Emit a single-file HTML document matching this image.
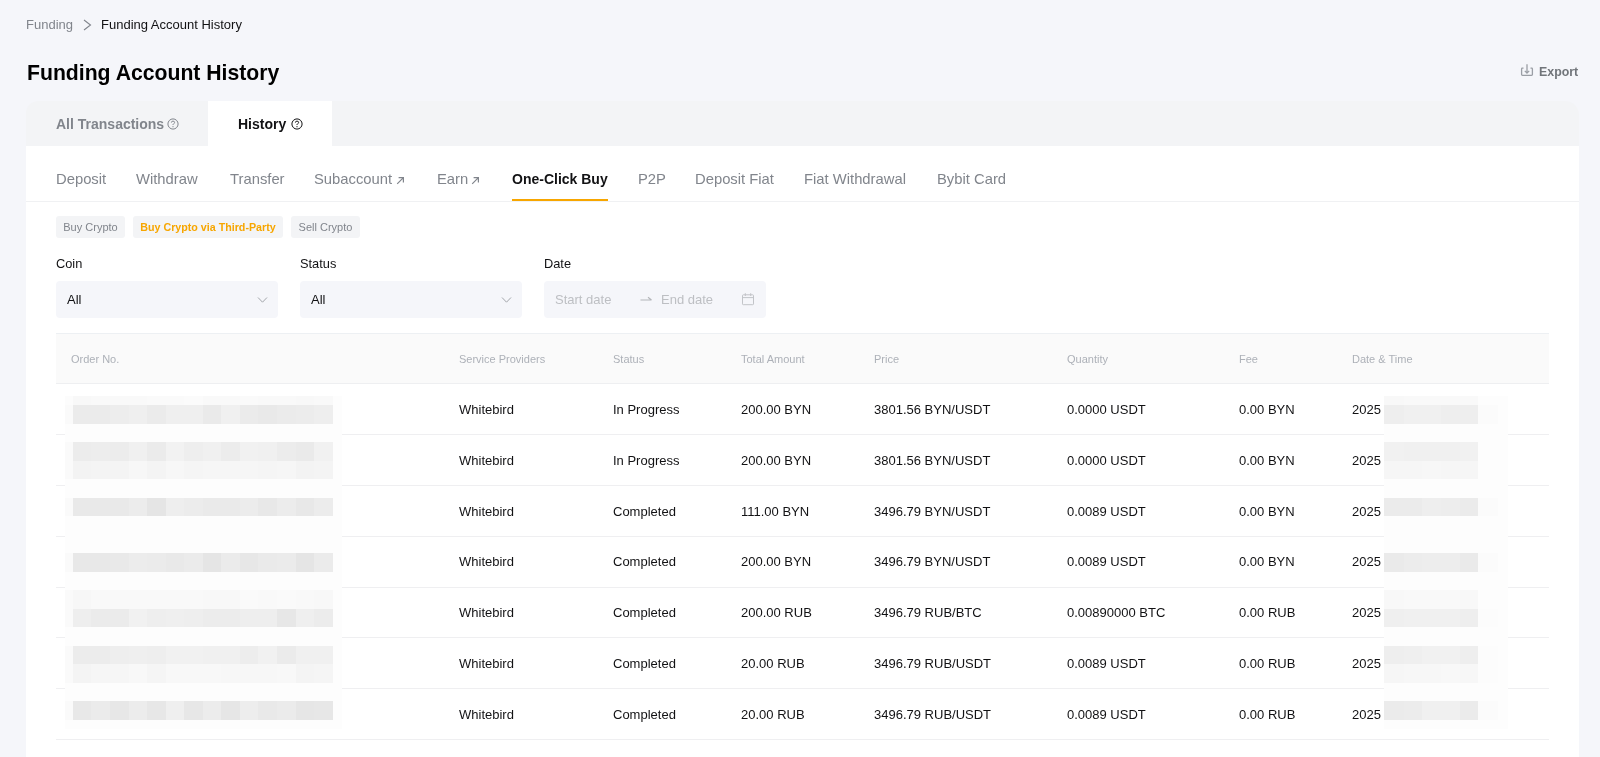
<!DOCTYPE html>
<html><head><meta charset="utf-8"><style>
*{margin:0;padding:0;box-sizing:border-box}
html,body{width:1600px;height:757px;overflow:hidden}
#root{position:absolute;left:0;top:0;width:1600px;height:757px;will-change:transform}
body{background:#f5f6fa;font-family:"Liberation Sans",sans-serif;color:#121214;position:relative}
.a{position:absolute;white-space:nowrap}
.bc{font-size:13px;line-height:16px}
.title{font-size:21.2px;font-weight:bold;line-height:24px;color:#000}
.export{font-size:12.4px;font-weight:bold;color:#71757a;line-height:16px}
.tabs{position:absolute;left:26px;top:101px;width:1553px;height:45px;background:#f3f4f6;border-radius:12px 14px 0 0;overflow:hidden}
.tab2{position:absolute;left:182px;top:0;width:124px;height:45px;background:#fff}
.tt{position:absolute;font-size:14px;font-weight:bold;line-height:16px;white-space:nowrap}
.card{position:absolute;left:26px;top:146px;width:1553px;height:611px;background:#fff}
.sub{position:absolute;top:170px;font-size:14.8px;color:#81858c;line-height:18px;white-space:nowrap}
.subact{font-weight:bold;color:#121214;font-size:14px}
.sep{position:absolute;left:26px;top:201px;width:1553px;height:1px;background:#f0f1f3}
.ul{position:absolute;left:512px;top:199px;width:96px;height:2px;background:#f7a600}
.chip{position:absolute;top:216px;height:22px;background:#f3f4f6;border-radius:3px;font-size:11px;line-height:22px;color:#81858c;text-align:center;white-space:nowrap}
.lbl{position:absolute;top:256px;font-size:12.8px;color:#121214;line-height:16px}
.sel{position:absolute;top:281px;height:37px;width:222px;background:#f5f6fa;border-radius:4px}
.sel .v{position:absolute;left:11px;top:11px;font-size:13px;line-height:16px;color:#121214}
.th{position:absolute;left:56px;top:333px;width:1493px;height:51px;background:#fafafa;border-top:1px solid #edf0f3;border-bottom:1px solid #eeeff1}
.th span{position:absolute;top:19px;font-size:11px;line-height:13px;color:#adb1b8;white-space:nowrap}
.row{position:absolute;left:56px;width:1493px;height:51px;border-bottom:1px solid #efeff1}
.rt{font-size:13px;line-height:16px;color:#121214}
.mz{position:absolute;background:#fdfdfd}
.mz i{position:absolute;display:block}
</style></head><body>
<div id="root"><div class="a bc" style="left:26px;top:17px;color:#81858c">Funding</div>
<svg class="a" style="left:83px;top:19px" width="9" height="12" viewBox="0 0 9 12"><path d="M1 1 L7.5 6 L1 11" fill="none" stroke="#81858c" stroke-width="1.1"/></svg>
<div class="a bc" style="left:101px;top:17px;color:#121214">Funding Account History</div>
<div class="a title" style="left:27px;top:61px">Funding Account History</div>
<svg class="a" style="left:1520px;top:63px" width="14" height="14" viewBox="0 0 14 14"><path d="M3.5 5.2 H2.3 Q1.6 5.2 1.6 5.9 V11.6 Q1.6 12.4 2.4 12.4 H11.6 Q12.4 12.4 12.4 11.6 V5.9 Q12.4 5.2 11.7 5.2 H10.5" fill="none" stroke="#9a9ea5" stroke-width="1.3"/><path d="M7 1.2 V10 M4.8 7.9 L7 10.1 L9.2 7.9" fill="none" stroke="#9a9ea5" stroke-width="1.3"/></svg>
<div class="a export" style="left:1539px;top:64px">Export</div>
<div class="tabs"><div class="tab2"></div></div>
<div class="card"></div>
<div class="tt" style="left:56px;top:116px;color:#81858c">All Transactions</div>
<svg class="a" style="left:167px;top:117.5px" width="12" height="12" viewBox="0 0 12 12"><circle cx="6" cy="6" r="5.1" fill="none" stroke="#81858c" stroke-width="1"/><path d="M4.4 4.6 Q4.4 3.1 6 3.1 Q7.6 3.1 7.6 4.5 Q7.6 5.4 6.6 5.8 Q6 6.1 6 7" fill="none" stroke="#81858c" stroke-width="0.95"/><circle cx="6" cy="8.7" r="0.6" fill="#81858c"/></svg>
<div class="tt" style="left:238px;top:116px;color:#121214">History</div>
<svg class="a" style="left:290.5px;top:117.5px" width="12" height="12" viewBox="0 0 12 12"><circle cx="6" cy="6" r="5.1" fill="none" stroke="#121214" stroke-width="1"/><path d="M4.4 4.6 Q4.4 3.1 6 3.1 Q7.6 3.1 7.6 4.5 Q7.6 5.4 6.6 5.8 Q6 6.1 6 7" fill="none" stroke="#121214" stroke-width="0.95"/><circle cx="6" cy="8.7" r="0.6" fill="#121214"/></svg>
<div class="sub" style="left:56px">Deposit</div>
<div class="sub" style="left:136px">Withdraw</div>
<div class="sub" style="left:230px">Transfer</div>
<div class="sub" style="left:314px">Subaccount</div>
<div class="sub" style="left:437px">Earn</div>
<div class="sub" style="left:638px">P2P</div>
<div class="sub" style="left:695px">Deposit Fiat</div>
<div class="sub" style="left:804px">Fiat Withdrawal</div>
<div class="sub" style="left:937px">Bybit Card</div>
<svg class="a" style="left:395.5px;top:176px" width="9" height="9" viewBox="0 0 9 9"><path d="M1.2 7.8 L7.4 1.6 M2.6 1.6 H7.4 V6.4" fill="none" stroke="#81858c" stroke-width="1.2"/></svg>
<svg class="a" style="left:470.5px;top:176px" width="9" height="9" viewBox="0 0 9 9"><path d="M1.2 7.8 L7.4 1.6 M2.6 1.6 H7.4 V6.4" fill="none" stroke="#81858c" stroke-width="1.2"/></svg>
<div class="sub subact" style="left:512px">One-Click Buy</div>
<div class="sep"></div><div class="ul"></div>
<div class="chip" style="left:56px;width:69px">Buy Crypto</div>
<div class="chip" style="left:133px;width:150px;color:#f7a600;font-weight:bold;font-size:10.7px">Buy Crypto via Third-Party</div>
<div class="chip" style="left:291px;width:69px">Sell Crypto</div>
<div class="lbl" style="left:56px">Coin</div>
<div class="lbl" style="left:300px">Status</div>
<div class="lbl" style="left:544px">Date</div>
<div class="sel" style="left:56px"><div class="v">All</div></div>
<svg class="a" style="left:256.5px;top:296px" width="11" height="8" viewBox="0 0 11 8"><path d="M1 1.5 L5.5 6.2 L10 1.5" fill="none" stroke="#a3a6ab" stroke-width="1"/></svg>
<div class="sel" style="left:300px"><div class="v">All</div></div>
<svg class="a" style="left:500.5px;top:296px" width="11" height="8" viewBox="0 0 11 8"><path d="M1 1.5 L5.5 6.2 L10 1.5" fill="none" stroke="#a3a6ab" stroke-width="1"/></svg>
<div class="sel" style="left:544px"></div>
<div class="a" style="left:555px;top:292px;font-size:13px;line-height:16px;color:#bdbfc3">Start date</div>
<div class="a" style="left:661px;top:292px;font-size:13px;line-height:16px;color:#bdbfc3">End date</div>
<svg class="a" style="left:640px;top:295px" width="13" height="8" viewBox="0 0 13 8"><path d="M0.5 5 H11.5 M8 2.2 L11.5 5" fill="none" stroke="#b3b5b9" stroke-width="1.1"/></svg>
<svg class="a" style="left:741px;top:292px" width="14" height="14" viewBox="0 0 14 14"><rect x="1.5" y="2.8" width="11" height="9.9" rx="0.8" fill="none" stroke="#c2c4c8" stroke-width="1"/><path d="M1.5 5.6 H12.5 M4.3 1.2 V4 M9.7 1.2 V4" fill="none" stroke="#c2c4c8" stroke-width="1"/></svg>
<div class="th"><span style="left:15px">Order No.</span><span style="left:403px">Service Providers</span><span style="left:557px">Status</span><span style="left:685px">Total Amount</span><span style="left:818px">Price</span><span style="left:1011px">Quantity</span><span style="left:1183px">Fee</span><span style="left:1296px">Date &amp; Time</span></div>
<div class="a" style="left:56px;top:434px;width:1493px;height:1px;background:#efeff1"></div>
<div class="a" style="left:56px;top:485px;width:1493px;height:1px;background:#efeff1"></div>
<div class="a" style="left:56px;top:536px;width:1493px;height:1px;background:#efeff1"></div>
<div class="a" style="left:56px;top:587px;width:1493px;height:1px;background:#efeff1"></div>
<div class="a" style="left:56px;top:637px;width:1493px;height:1px;background:#efeff1"></div>
<div class="a" style="left:56px;top:688px;width:1493px;height:1px;background:#efeff1"></div>
<div class="a" style="left:56px;top:739px;width:1493px;height:1px;background:#efeff1"></div>
<div class="a rt" style="left:459px;top:402.0px">Whitebird</div>
<div class="a rt" style="left:613px;top:402.0px">In Progress</div>
<div class="a rt" style="left:741px;top:402.0px">200.00 BYN</div>
<div class="a rt" style="left:874px;top:402.0px">3801.56 BYN/USDT</div>
<div class="a rt" style="left:1067px;top:402.0px">0.0000 USDT</div>
<div class="a rt" style="left:1239px;top:402.0px">0.00 BYN</div>
<div class="a rt" style="left:1352px;top:402.0px">2025</div>
<div class="a rt" style="left:459px;top:452.8px">Whitebird</div>
<div class="a rt" style="left:613px;top:452.8px">In Progress</div>
<div class="a rt" style="left:741px;top:452.8px">200.00 BYN</div>
<div class="a rt" style="left:874px;top:452.8px">3801.56 BYN/USDT</div>
<div class="a rt" style="left:1067px;top:452.8px">0.0000 USDT</div>
<div class="a rt" style="left:1239px;top:452.8px">0.00 BYN</div>
<div class="a rt" style="left:1352px;top:452.8px">2025</div>
<div class="a rt" style="left:459px;top:503.6px">Whitebird</div>
<div class="a rt" style="left:613px;top:503.6px">Completed</div>
<div class="a rt" style="left:741px;top:503.6px">111.00 BYN</div>
<div class="a rt" style="left:874px;top:503.6px">3496.79 BYN/USDT</div>
<div class="a rt" style="left:1067px;top:503.6px">0.0089 USDT</div>
<div class="a rt" style="left:1239px;top:503.6px">0.00 BYN</div>
<div class="a rt" style="left:1352px;top:503.6px">2025</div>
<div class="a rt" style="left:459px;top:554.4px">Whitebird</div>
<div class="a rt" style="left:613px;top:554.4px">Completed</div>
<div class="a rt" style="left:741px;top:554.4px">200.00 BYN</div>
<div class="a rt" style="left:874px;top:554.4px">3496.79 BYN/USDT</div>
<div class="a rt" style="left:1067px;top:554.4px">0.0089 USDT</div>
<div class="a rt" style="left:1239px;top:554.4px">0.00 BYN</div>
<div class="a rt" style="left:1352px;top:554.4px">2025</div>
<div class="a rt" style="left:459px;top:605.2px">Whitebird</div>
<div class="a rt" style="left:613px;top:605.2px">Completed</div>
<div class="a rt" style="left:741px;top:605.2px">200.00 RUB</div>
<div class="a rt" style="left:874px;top:605.2px">3496.79 RUB/BTC</div>
<div class="a rt" style="left:1067px;top:605.2px">0.00890000 BTC</div>
<div class="a rt" style="left:1239px;top:605.2px">0.00 RUB</div>
<div class="a rt" style="left:1352px;top:605.2px">2025</div>
<div class="a rt" style="left:459px;top:656.0px">Whitebird</div>
<div class="a rt" style="left:613px;top:656.0px">Completed</div>
<div class="a rt" style="left:741px;top:656.0px">20.00 RUB</div>
<div class="a rt" style="left:874px;top:656.0px">3496.79 RUB/USDT</div>
<div class="a rt" style="left:1067px;top:656.0px">0.0089 USDT</div>
<div class="a rt" style="left:1239px;top:656.0px">0.00 RUB</div>
<div class="a rt" style="left:1352px;top:656.0px">2025</div>
<div class="a rt" style="left:459px;top:706.8px">Whitebird</div>
<div class="a rt" style="left:613px;top:706.8px">Completed</div>
<div class="a rt" style="left:741px;top:706.8px">20.00 RUB</div>
<div class="a rt" style="left:874px;top:706.8px">3496.79 RUB/USDT</div>
<div class="a rt" style="left:1067px;top:706.8px">0.0089 USDT</div>
<div class="a rt" style="left:1239px;top:706.8px">0.00 RUB</div>
<div class="a rt" style="left:1352px;top:706.8px">2025</div>
<div class="mz" style="left:65px;top:395.7px;width:277.0px;height:332.9px"><i style="left:0;top:0.0px;width:7.8px;height:9.8px;background:rgb(252,252,252)"></i><i style="left:7.8px;top:0.0px;width:18.9px;height:9.8px;background:rgb(248,248,248)"></i><i style="left:26.4px;top:0.0px;width:18.9px;height:9.8px;background:rgb(249,249,249)"></i><i style="left:44.9px;top:0.0px;width:18.9px;height:9.8px;background:rgb(249,249,249)"></i><i style="left:63.5px;top:0.0px;width:18.9px;height:9.8px;background:rgb(249,249,249)"></i><i style="left:82.0px;top:0.0px;width:18.9px;height:9.8px;background:rgb(250,250,250)"></i><i style="left:100.6px;top:0.0px;width:18.9px;height:9.8px;background:rgb(250,250,250)"></i><i style="left:119.1px;top:0.0px;width:18.9px;height:9.8px;background:rgb(251,251,251)"></i><i style="left:137.7px;top:0.0px;width:18.9px;height:9.8px;background:rgb(249,249,249)"></i><i style="left:156.2px;top:0.0px;width:18.9px;height:9.8px;background:rgb(249,249,249)"></i><i style="left:174.8px;top:0.0px;width:18.9px;height:9.8px;background:rgb(250,250,250)"></i><i style="left:193.4px;top:0.0px;width:18.9px;height:9.8px;background:rgb(249,249,249)"></i><i style="left:211.9px;top:0.0px;width:18.9px;height:9.8px;background:rgb(249,249,249)"></i><i style="left:230.5px;top:0.0px;width:18.9px;height:9.8px;background:rgb(248,248,248)"></i><i style="left:249.0px;top:0.0px;width:18.9px;height:9.8px;background:rgb(249,249,249)"></i><i style="left:0;top:9.5px;width:7.8px;height:18.8px;background:rgb(250,250,250)"></i><i style="left:7.8px;top:9.5px;width:18.9px;height:18.8px;background:rgb(235,235,235)"></i><i style="left:26.4px;top:9.5px;width:18.9px;height:18.8px;background:rgb(235,235,235)"></i><i style="left:44.9px;top:9.5px;width:18.9px;height:18.8px;background:rgb(237,237,237)"></i><i style="left:63.5px;top:9.5px;width:18.9px;height:18.8px;background:rgb(239,239,239)"></i><i style="left:82.0px;top:9.5px;width:18.9px;height:18.8px;background:rgb(235,235,235)"></i><i style="left:100.6px;top:9.5px;width:18.9px;height:18.8px;background:rgb(239,239,239)"></i><i style="left:119.1px;top:9.5px;width:18.9px;height:18.8px;background:rgb(239,239,239)"></i><i style="left:137.7px;top:9.5px;width:18.9px;height:18.8px;background:rgb(234,234,234)"></i><i style="left:156.2px;top:9.5px;width:18.9px;height:18.8px;background:rgb(240,240,240)"></i><i style="left:174.8px;top:9.5px;width:18.9px;height:18.8px;background:rgb(235,235,235)"></i><i style="left:193.4px;top:9.5px;width:18.9px;height:18.8px;background:rgb(233,233,233)"></i><i style="left:211.9px;top:9.5px;width:18.9px;height:18.8px;background:rgb(235,235,235)"></i><i style="left:230.5px;top:9.5px;width:18.9px;height:18.8px;background:rgb(236,236,236)"></i><i style="left:249.0px;top:9.5px;width:18.9px;height:18.8px;background:rgb(238,238,238)"></i><i style="left:0;top:46.5px;width:7.8px;height:18.8px;background:rgb(250,250,250)"></i><i style="left:7.8px;top:46.5px;width:18.9px;height:18.8px;background:rgb(236,236,236)"></i><i style="left:26.4px;top:46.5px;width:18.9px;height:18.8px;background:rgb(237,237,237)"></i><i style="left:44.9px;top:46.5px;width:18.9px;height:18.8px;background:rgb(236,236,236)"></i><i style="left:63.5px;top:46.5px;width:18.9px;height:18.8px;background:rgb(240,240,240)"></i><i style="left:82.0px;top:46.5px;width:18.9px;height:18.8px;background:rgb(235,235,235)"></i><i style="left:100.6px;top:46.5px;width:18.9px;height:18.8px;background:rgb(242,242,242)"></i><i style="left:119.1px;top:46.5px;width:18.9px;height:18.8px;background:rgb(238,238,238)"></i><i style="left:137.7px;top:46.5px;width:18.9px;height:18.8px;background:rgb(240,240,240)"></i><i style="left:156.2px;top:46.5px;width:18.9px;height:18.8px;background:rgb(236,236,236)"></i><i style="left:174.8px;top:46.5px;width:18.9px;height:18.8px;background:rgb(241,241,241)"></i><i style="left:193.4px;top:46.5px;width:18.9px;height:18.8px;background:rgb(240,240,240)"></i><i style="left:211.9px;top:46.5px;width:18.9px;height:18.8px;background:rgb(236,236,236)"></i><i style="left:230.5px;top:46.5px;width:18.9px;height:18.8px;background:rgb(234,234,234)"></i><i style="left:249.0px;top:46.5px;width:18.9px;height:18.8px;background:rgb(241,241,241)"></i><i style="left:0;top:65.0px;width:7.8px;height:18.8px;background:rgb(250,250,250)"></i><i style="left:7.8px;top:65.0px;width:18.9px;height:18.8px;background:rgb(243,243,243)"></i><i style="left:26.4px;top:65.0px;width:18.9px;height:18.8px;background:rgb(244,244,244)"></i><i style="left:44.9px;top:65.0px;width:18.9px;height:18.8px;background:rgb(244,244,244)"></i><i style="left:63.5px;top:65.0px;width:18.9px;height:18.8px;background:rgb(247,247,247)"></i><i style="left:82.0px;top:65.0px;width:18.9px;height:18.8px;background:rgb(244,244,244)"></i><i style="left:100.6px;top:65.0px;width:18.9px;height:18.8px;background:rgb(247,247,247)"></i><i style="left:119.1px;top:65.0px;width:18.9px;height:18.8px;background:rgb(245,245,245)"></i><i style="left:137.7px;top:65.0px;width:18.9px;height:18.8px;background:rgb(246,246,246)"></i><i style="left:156.2px;top:65.0px;width:18.9px;height:18.8px;background:rgb(246,246,246)"></i><i style="left:174.8px;top:65.0px;width:18.9px;height:18.8px;background:rgb(246,246,246)"></i><i style="left:193.4px;top:65.0px;width:18.9px;height:18.8px;background:rgb(245,245,245)"></i><i style="left:211.9px;top:65.0px;width:18.9px;height:18.8px;background:rgb(246,246,246)"></i><i style="left:230.5px;top:65.0px;width:18.9px;height:18.8px;background:rgb(243,243,243)"></i><i style="left:249.0px;top:65.0px;width:18.9px;height:18.8px;background:rgb(244,244,244)"></i><i style="left:0;top:102.0px;width:7.8px;height:18.8px;background:rgb(250,250,250)"></i><i style="left:7.8px;top:102.0px;width:18.9px;height:18.8px;background:rgb(233,233,233)"></i><i style="left:26.4px;top:102.0px;width:18.9px;height:18.8px;background:rgb(233,233,233)"></i><i style="left:44.9px;top:102.0px;width:18.9px;height:18.8px;background:rgb(233,233,233)"></i><i style="left:63.5px;top:102.0px;width:18.9px;height:18.8px;background:rgb(236,236,236)"></i><i style="left:82.0px;top:102.0px;width:18.9px;height:18.8px;background:rgb(229,229,229)"></i><i style="left:100.6px;top:102.0px;width:18.9px;height:18.8px;background:rgb(238,238,238)"></i><i style="left:119.1px;top:102.0px;width:18.9px;height:18.8px;background:rgb(236,236,236)"></i><i style="left:137.7px;top:102.0px;width:18.9px;height:18.8px;background:rgb(234,234,234)"></i><i style="left:156.2px;top:102.0px;width:18.9px;height:18.8px;background:rgb(234,234,234)"></i><i style="left:174.8px;top:102.0px;width:18.9px;height:18.8px;background:rgb(236,236,236)"></i><i style="left:193.4px;top:102.0px;width:18.9px;height:18.8px;background:rgb(232,232,232)"></i><i style="left:211.9px;top:102.0px;width:18.9px;height:18.8px;background:rgb(236,236,236)"></i><i style="left:230.5px;top:102.0px;width:18.9px;height:18.8px;background:rgb(232,232,232)"></i><i style="left:249.0px;top:102.0px;width:18.9px;height:18.8px;background:rgb(236,236,236)"></i><i style="left:0;top:157.5px;width:7.8px;height:18.8px;background:rgb(250,250,250)"></i><i style="left:7.8px;top:157.5px;width:18.9px;height:18.8px;background:rgb(232,232,232)"></i><i style="left:26.4px;top:157.5px;width:18.9px;height:18.8px;background:rgb(232,232,232)"></i><i style="left:44.9px;top:157.5px;width:18.9px;height:18.8px;background:rgb(233,233,233)"></i><i style="left:63.5px;top:157.5px;width:18.9px;height:18.8px;background:rgb(236,236,236)"></i><i style="left:82.0px;top:157.5px;width:18.9px;height:18.8px;background:rgb(235,235,235)"></i><i style="left:100.6px;top:157.5px;width:18.9px;height:18.8px;background:rgb(233,233,233)"></i><i style="left:119.1px;top:157.5px;width:18.9px;height:18.8px;background:rgb(235,235,235)"></i><i style="left:137.7px;top:157.5px;width:18.9px;height:18.8px;background:rgb(229,229,229)"></i><i style="left:156.2px;top:157.5px;width:18.9px;height:18.8px;background:rgb(235,235,235)"></i><i style="left:174.8px;top:157.5px;width:18.9px;height:18.8px;background:rgb(231,231,231)"></i><i style="left:193.4px;top:157.5px;width:18.9px;height:18.8px;background:rgb(234,234,234)"></i><i style="left:211.9px;top:157.5px;width:18.9px;height:18.8px;background:rgb(235,235,235)"></i><i style="left:230.5px;top:157.5px;width:18.9px;height:18.8px;background:rgb(229,229,229)"></i><i style="left:249.0px;top:157.5px;width:18.9px;height:18.8px;background:rgb(235,235,235)"></i><i style="left:0;top:194.5px;width:7.8px;height:18.8px;background:rgb(250,250,250)"></i><i style="left:7.8px;top:194.5px;width:18.9px;height:18.8px;background:rgb(247,247,247)"></i><i style="left:26.4px;top:194.5px;width:18.9px;height:18.8px;background:rgb(249,249,249)"></i><i style="left:44.9px;top:194.5px;width:18.9px;height:18.8px;background:rgb(249,249,249)"></i><i style="left:63.5px;top:194.5px;width:18.9px;height:18.8px;background:rgb(249,249,249)"></i><i style="left:82.0px;top:194.5px;width:18.9px;height:18.8px;background:rgb(249,249,249)"></i><i style="left:100.6px;top:194.5px;width:18.9px;height:18.8px;background:rgb(249,249,249)"></i><i style="left:119.1px;top:194.5px;width:18.9px;height:18.8px;background:rgb(249,249,249)"></i><i style="left:137.7px;top:194.5px;width:18.9px;height:18.8px;background:rgb(248,248,248)"></i><i style="left:156.2px;top:194.5px;width:18.9px;height:18.8px;background:rgb(248,248,248)"></i><i style="left:174.8px;top:194.5px;width:18.9px;height:18.8px;background:rgb(250,250,250)"></i><i style="left:193.4px;top:194.5px;width:18.9px;height:18.8px;background:rgb(249,249,249)"></i><i style="left:211.9px;top:194.5px;width:18.9px;height:18.8px;background:rgb(250,250,250)"></i><i style="left:230.5px;top:194.5px;width:18.9px;height:18.8px;background:rgb(249,249,249)"></i><i style="left:249.0px;top:194.5px;width:18.9px;height:18.8px;background:rgb(248,248,248)"></i><i style="left:0;top:213.0px;width:7.8px;height:18.8px;background:rgb(250,250,250)"></i><i style="left:7.8px;top:213.0px;width:18.9px;height:18.8px;background:rgb(238,238,238)"></i><i style="left:26.4px;top:213.0px;width:18.9px;height:18.8px;background:rgb(235,235,235)"></i><i style="left:44.9px;top:213.0px;width:18.9px;height:18.8px;background:rgb(235,235,235)"></i><i style="left:63.5px;top:213.0px;width:18.9px;height:18.8px;background:rgb(241,241,241)"></i><i style="left:82.0px;top:213.0px;width:18.9px;height:18.8px;background:rgb(238,238,238)"></i><i style="left:100.6px;top:213.0px;width:18.9px;height:18.8px;background:rgb(239,239,239)"></i><i style="left:119.1px;top:213.0px;width:18.9px;height:18.8px;background:rgb(238,238,238)"></i><i style="left:137.7px;top:213.0px;width:18.9px;height:18.8px;background:rgb(236,236,236)"></i><i style="left:156.2px;top:213.0px;width:18.9px;height:18.8px;background:rgb(236,236,236)"></i><i style="left:174.8px;top:213.0px;width:18.9px;height:18.8px;background:rgb(238,238,238)"></i><i style="left:193.4px;top:213.0px;width:18.9px;height:18.8px;background:rgb(238,238,238)"></i><i style="left:211.9px;top:213.0px;width:18.9px;height:18.8px;background:rgb(231,231,231)"></i><i style="left:230.5px;top:213.0px;width:18.9px;height:18.8px;background:rgb(239,239,239)"></i><i style="left:249.0px;top:213.0px;width:18.9px;height:18.8px;background:rgb(236,236,236)"></i><i style="left:0;top:250.0px;width:7.8px;height:18.8px;background:rgb(250,250,250)"></i><i style="left:7.8px;top:250.0px;width:18.9px;height:18.8px;background:rgb(236,236,236)"></i><i style="left:26.4px;top:250.0px;width:18.9px;height:18.8px;background:rgb(236,236,236)"></i><i style="left:44.9px;top:250.0px;width:18.9px;height:18.8px;background:rgb(238,238,238)"></i><i style="left:63.5px;top:250.0px;width:18.9px;height:18.8px;background:rgb(239,239,239)"></i><i style="left:82.0px;top:250.0px;width:18.9px;height:18.8px;background:rgb(238,238,238)"></i><i style="left:100.6px;top:250.0px;width:18.9px;height:18.8px;background:rgb(241,241,241)"></i><i style="left:119.1px;top:250.0px;width:18.9px;height:18.8px;background:rgb(241,241,241)"></i><i style="left:137.7px;top:250.0px;width:18.9px;height:18.8px;background:rgb(240,240,240)"></i><i style="left:156.2px;top:250.0px;width:18.9px;height:18.8px;background:rgb(240,240,240)"></i><i style="left:174.8px;top:250.0px;width:18.9px;height:18.8px;background:rgb(237,237,237)"></i><i style="left:193.4px;top:250.0px;width:18.9px;height:18.8px;background:rgb(241,241,241)"></i><i style="left:211.9px;top:250.0px;width:18.9px;height:18.8px;background:rgb(235,235,235)"></i><i style="left:230.5px;top:250.0px;width:18.9px;height:18.8px;background:rgb(240,240,240)"></i><i style="left:249.0px;top:250.0px;width:18.9px;height:18.8px;background:rgb(240,240,240)"></i><i style="left:0;top:268.5px;width:7.8px;height:18.8px;background:rgb(250,250,250)"></i><i style="left:7.8px;top:268.5px;width:18.9px;height:18.8px;background:rgb(244,244,244)"></i><i style="left:26.4px;top:268.5px;width:18.9px;height:18.8px;background:rgb(246,246,246)"></i><i style="left:44.9px;top:268.5px;width:18.9px;height:18.8px;background:rgb(246,246,246)"></i><i style="left:63.5px;top:268.5px;width:18.9px;height:18.8px;background:rgb(248,248,248)"></i><i style="left:82.0px;top:268.5px;width:18.9px;height:18.8px;background:rgb(245,245,245)"></i><i style="left:100.6px;top:268.5px;width:18.9px;height:18.8px;background:rgb(248,248,248)"></i><i style="left:119.1px;top:268.5px;width:18.9px;height:18.8px;background:rgb(248,248,248)"></i><i style="left:137.7px;top:268.5px;width:18.9px;height:18.8px;background:rgb(248,248,248)"></i><i style="left:156.2px;top:268.5px;width:18.9px;height:18.8px;background:rgb(247,247,247)"></i><i style="left:174.8px;top:268.5px;width:18.9px;height:18.8px;background:rgb(247,247,247)"></i><i style="left:193.4px;top:268.5px;width:18.9px;height:18.8px;background:rgb(247,247,247)"></i><i style="left:211.9px;top:268.5px;width:18.9px;height:18.8px;background:rgb(248,248,248)"></i><i style="left:230.5px;top:268.5px;width:18.9px;height:18.8px;background:rgb(244,244,244)"></i><i style="left:249.0px;top:268.5px;width:18.9px;height:18.8px;background:rgb(245,245,245)"></i><i style="left:0;top:305.5px;width:7.8px;height:18.8px;background:rgb(250,250,250)"></i><i style="left:7.8px;top:305.5px;width:18.9px;height:18.8px;background:rgb(232,232,232)"></i><i style="left:26.4px;top:305.5px;width:18.9px;height:18.8px;background:rgb(235,235,235)"></i><i style="left:44.9px;top:305.5px;width:18.9px;height:18.8px;background:rgb(231,231,231)"></i><i style="left:63.5px;top:305.5px;width:18.9px;height:18.8px;background:rgb(236,236,236)"></i><i style="left:82.0px;top:305.5px;width:18.9px;height:18.8px;background:rgb(231,231,231)"></i><i style="left:100.6px;top:305.5px;width:18.9px;height:18.8px;background:rgb(239,239,239)"></i><i style="left:119.1px;top:305.5px;width:18.9px;height:18.8px;background:rgb(231,231,231)"></i><i style="left:137.7px;top:305.5px;width:18.9px;height:18.8px;background:rgb(236,236,236)"></i><i style="left:156.2px;top:305.5px;width:18.9px;height:18.8px;background:rgb(230,230,230)"></i><i style="left:174.8px;top:305.5px;width:18.9px;height:18.8px;background:rgb(237,237,237)"></i><i style="left:193.4px;top:305.5px;width:18.9px;height:18.8px;background:rgb(233,233,233)"></i><i style="left:211.9px;top:305.5px;width:18.9px;height:18.8px;background:rgb(235,235,235)"></i><i style="left:230.5px;top:305.5px;width:18.9px;height:18.8px;background:rgb(230,230,230)"></i><i style="left:249.0px;top:305.5px;width:18.9px;height:18.8px;background:rgb(231,231,231)"></i></div>
<div class="mz" style="left:1383.5px;top:395.7px;width:124.0px;height:332.9px"><i style="left:0.0px;top:0.0px;width:20.8px;height:9.8px;background:rgb(248,248,248)"></i><i style="left:20.5px;top:0.0px;width:18.3px;height:9.8px;background:rgb(249,249,249)"></i><i style="left:38.5px;top:0.0px;width:19.3px;height:9.8px;background:rgb(249,249,249)"></i><i style="left:57.5px;top:0.0px;width:18.8px;height:9.8px;background:rgb(249,249,249)"></i><i style="left:76.0px;top:0.0px;width:19.1px;height:9.8px;background:rgb(249,249,249)"></i><i style="left:94.8px;top:0.0px;width:19.5px;height:9.8px;background:rgb(253,253,253)"></i><i style="left:0.0px;top:9.5px;width:20.8px;height:18.8px;background:rgb(238,238,238)"></i><i style="left:20.5px;top:9.5px;width:18.3px;height:18.8px;background:rgb(240,240,240)"></i><i style="left:38.5px;top:9.5px;width:19.3px;height:18.8px;background:rgb(240,240,240)"></i><i style="left:57.5px;top:9.5px;width:18.8px;height:18.8px;background:rgb(238,238,238)"></i><i style="left:76.0px;top:9.5px;width:19.1px;height:18.8px;background:rgb(238,238,238)"></i><i style="left:94.8px;top:9.5px;width:19.5px;height:18.8px;background:rgb(251,251,251)"></i><i style="left:0.0px;top:46.5px;width:20.8px;height:18.8px;background:rgb(241,241,241)"></i><i style="left:20.5px;top:46.5px;width:18.3px;height:18.8px;background:rgb(240,240,240)"></i><i style="left:38.5px;top:46.5px;width:19.3px;height:18.8px;background:rgb(240,240,240)"></i><i style="left:57.5px;top:46.5px;width:18.8px;height:18.8px;background:rgb(240,240,240)"></i><i style="left:76.0px;top:46.5px;width:19.1px;height:18.8px;background:rgb(241,241,241)"></i><i style="left:94.8px;top:46.5px;width:19.5px;height:18.8px;background:rgb(253,253,253)"></i><i style="left:0.0px;top:65.0px;width:20.8px;height:18.8px;background:rgb(246,246,246)"></i><i style="left:20.5px;top:65.0px;width:18.3px;height:18.8px;background:rgb(246,246,246)"></i><i style="left:38.5px;top:65.0px;width:19.3px;height:18.8px;background:rgb(247,247,247)"></i><i style="left:57.5px;top:65.0px;width:18.8px;height:18.8px;background:rgb(246,246,246)"></i><i style="left:76.0px;top:65.0px;width:19.1px;height:18.8px;background:rgb(246,246,246)"></i><i style="left:94.8px;top:65.0px;width:19.5px;height:18.8px;background:rgb(253,253,253)"></i><i style="left:0.0px;top:102.0px;width:20.8px;height:18.8px;background:rgb(235,235,235)"></i><i style="left:20.5px;top:102.0px;width:18.3px;height:18.8px;background:rgb(235,235,235)"></i><i style="left:38.5px;top:102.0px;width:19.3px;height:18.8px;background:rgb(238,238,238)"></i><i style="left:57.5px;top:102.0px;width:18.8px;height:18.8px;background:rgb(237,237,237)"></i><i style="left:76.0px;top:102.0px;width:19.1px;height:18.8px;background:rgb(235,235,235)"></i><i style="left:94.8px;top:102.0px;width:19.5px;height:18.8px;background:rgb(251,251,251)"></i><i style="left:0.0px;top:157.5px;width:20.8px;height:18.8px;background:rgb(234,234,234)"></i><i style="left:20.5px;top:157.5px;width:18.3px;height:18.8px;background:rgb(236,236,236)"></i><i style="left:38.5px;top:157.5px;width:19.3px;height:18.8px;background:rgb(237,237,237)"></i><i style="left:57.5px;top:157.5px;width:18.8px;height:18.8px;background:rgb(237,237,237)"></i><i style="left:76.0px;top:157.5px;width:19.1px;height:18.8px;background:rgb(234,234,234)"></i><i style="left:94.8px;top:157.5px;width:19.5px;height:18.8px;background:rgb(251,251,251)"></i><i style="left:0.0px;top:194.5px;width:20.8px;height:18.8px;background:rgb(248,248,248)"></i><i style="left:20.5px;top:194.5px;width:18.3px;height:18.8px;background:rgb(249,249,249)"></i><i style="left:38.5px;top:194.5px;width:19.3px;height:18.8px;background:rgb(249,249,249)"></i><i style="left:57.5px;top:194.5px;width:18.8px;height:18.8px;background:rgb(249,249,249)"></i><i style="left:76.0px;top:194.5px;width:19.1px;height:18.8px;background:rgb(248,248,248)"></i><i style="left:94.8px;top:194.5px;width:19.5px;height:18.8px;background:rgb(253,253,253)"></i><i style="left:0.0px;top:213.0px;width:20.8px;height:18.8px;background:rgb(239,239,239)"></i><i style="left:20.5px;top:213.0px;width:18.3px;height:18.8px;background:rgb(240,240,240)"></i><i style="left:38.5px;top:213.0px;width:19.3px;height:18.8px;background:rgb(240,240,240)"></i><i style="left:57.5px;top:213.0px;width:18.8px;height:18.8px;background:rgb(240,240,240)"></i><i style="left:76.0px;top:213.0px;width:19.1px;height:18.8px;background:rgb(238,238,238)"></i><i style="left:94.8px;top:213.0px;width:19.5px;height:18.8px;background:rgb(252,252,252)"></i><i style="left:0.0px;top:250.0px;width:20.8px;height:18.8px;background:rgb(238,238,238)"></i><i style="left:20.5px;top:250.0px;width:18.3px;height:18.8px;background:rgb(239,239,239)"></i><i style="left:38.5px;top:250.0px;width:19.3px;height:18.8px;background:rgb(241,241,241)"></i><i style="left:57.5px;top:250.0px;width:18.8px;height:18.8px;background:rgb(241,241,241)"></i><i style="left:76.0px;top:250.0px;width:19.1px;height:18.8px;background:rgb(238,238,238)"></i><i style="left:94.8px;top:250.0px;width:19.5px;height:18.8px;background:rgb(252,252,252)"></i><i style="left:0.0px;top:268.5px;width:20.8px;height:18.8px;background:rgb(246,246,246)"></i><i style="left:20.5px;top:268.5px;width:18.3px;height:18.8px;background:rgb(247,247,247)"></i><i style="left:38.5px;top:268.5px;width:19.3px;height:18.8px;background:rgb(247,247,247)"></i><i style="left:57.5px;top:268.5px;width:18.8px;height:18.8px;background:rgb(248,248,248)"></i><i style="left:76.0px;top:268.5px;width:19.1px;height:18.8px;background:rgb(247,247,247)"></i><i style="left:94.8px;top:268.5px;width:19.5px;height:18.8px;background:rgb(252,252,252)"></i><i style="left:0.0px;top:305.5px;width:20.8px;height:18.8px;background:rgb(235,235,235)"></i><i style="left:20.5px;top:305.5px;width:18.3px;height:18.8px;background:rgb(236,236,236)"></i><i style="left:38.5px;top:305.5px;width:19.3px;height:18.8px;background:rgb(240,240,240)"></i><i style="left:57.5px;top:305.5px;width:18.8px;height:18.8px;background:rgb(240,240,240)"></i><i style="left:76.0px;top:305.5px;width:19.1px;height:18.8px;background:rgb(235,235,235)"></i><i style="left:94.8px;top:305.5px;width:19.5px;height:18.8px;background:rgb(251,251,251)"></i></div></div>
</body></html>
